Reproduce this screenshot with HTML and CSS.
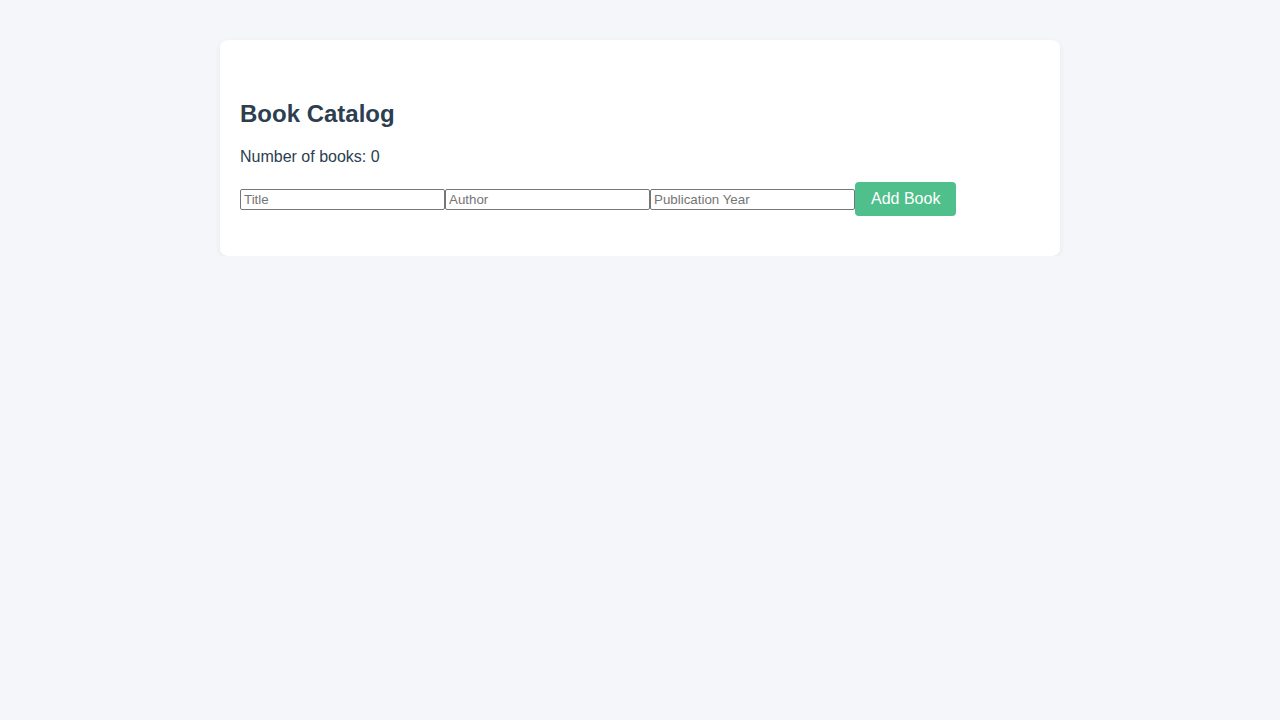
FILE: index.html
```html
<!DOCTYPE html>
<html lang="en">
<head>
<meta charset="utf-8">
<title>Book Catalog</title>
<link rel="stylesheet" href="styles.css">
</head>
<body>
<main class="card">
  <h2 class="title">Book Catalog</h2>
  <p class="count">Number of books: 0</p>
  <form class="book-form">
    <input class="field" type="text" placeholder="Title">
    <input class="field" type="text" placeholder="Author">
    <input class="field" type="text" placeholder="Publication Year">
    <button class="add-btn" type="button">Add Book</button>
  </form>
</main>
</body>
</html>
```

FILE: styles.css
```css
html, body {
  margin: 0;
  padding: 0;
}
body {
  background: #f5f6fa;
  font-family: "Liberation Sans", Arial, sans-serif;
  color: #2c3e50;
  padding-top: 40px;
}
.card {
  width: 800px;
  margin: 0 auto;
  background: #ffffff;
  border-radius: 8px;
  padding: 20px;
  box-shadow: 0 2px 6px rgba(0, 0, 0, 0.06);
}
.title {
  font-size: 24px;
  font-weight: bold;
  margin: 40px 0 20px;
  color: #2c3e50;
}
.count {
  font-size: 16px;
  margin: 0 0 16px;
}
.book-form {
  display: flex;
  align-items: center;
  margin: 0 0 20px;
}
.field {
  box-sizing: border-box;
  width: 205px;
  height: 21px;
  margin: 0;
  padding: 1px 3px;
  border: 1px solid #767676;
  border-radius: 2px;
  font-family: "Liberation Sans", Arial, sans-serif;
  font-size: 13.333px;
  color: #000;
  background: #fff;
}
.field::placeholder {
  color: #757575;
}
.add-btn {
  margin: 0;
  padding: 8px 16px;
  border: none;
  border-radius: 4px;
  background: #4fbf8b;
  color: #ffffff;
  font-family: "Liberation Sans", Arial, sans-serif;
  font-size: 16px;
  line-height: normal;
  cursor: pointer;
}
```
